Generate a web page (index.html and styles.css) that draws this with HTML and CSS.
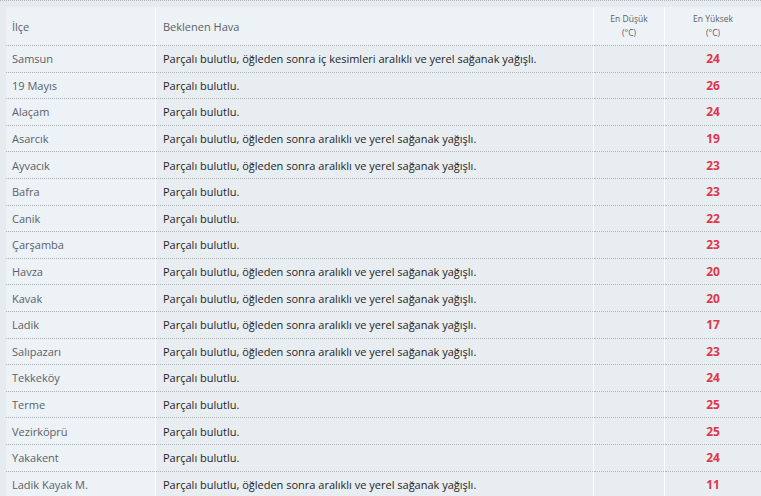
FILE: index.html
```html
<!DOCTYPE html>
<html lang="tr">
<head>
<meta charset="utf-8">
<title>Samsun Hava Durumu</title>
<link rel="stylesheet" href="styles.css">
</head>
<body>
<div class="page">
<table class="forecast">
  <thead>
    <tr>
      <th class="c-name">İlçe</th>
      <th class="c-desc">Beklenen Hava</th>
      <th class="c-min">En Düşük<br>(°C)</th>
      <th class="c-max">En Yüksek<br>(°C)</th>
    </tr>
  </thead>
  <tbody>
    <tr><td class="c-name">Samsun</td><td class="c-desc">Parçalı bulutlu, öğleden sonra iç kesimleri aralıklı ve yerel sağanak yağışlı.</td><td class="c-min"></td><td class="c-max">24</td></tr>
    <tr><td class="c-name">19 Mayıs</td><td class="c-desc">Parçalı bulutlu.</td><td class="c-min"></td><td class="c-max">26</td></tr>
    <tr><td class="c-name">Alaçam</td><td class="c-desc">Parçalı bulutlu.</td><td class="c-min"></td><td class="c-max">24</td></tr>
    <tr><td class="c-name">Asarcık</td><td class="c-desc">Parçalı bulutlu, öğleden sonra aralıklı ve yerel sağanak yağışlı.</td><td class="c-min"></td><td class="c-max">19</td></tr>
    <tr><td class="c-name">Ayvacık</td><td class="c-desc">Parçalı bulutlu, öğleden sonra aralıklı ve yerel sağanak yağışlı.</td><td class="c-min"></td><td class="c-max">23</td></tr>
    <tr><td class="c-name">Bafra</td><td class="c-desc">Parçalı bulutlu.</td><td class="c-min"></td><td class="c-max">23</td></tr>
    <tr><td class="c-name">Canik</td><td class="c-desc">Parçalı bulutlu.</td><td class="c-min"></td><td class="c-max">22</td></tr>
    <tr><td class="c-name">Çarşamba</td><td class="c-desc">Parçalı bulutlu.</td><td class="c-min"></td><td class="c-max">23</td></tr>
    <tr><td class="c-name">Havza</td><td class="c-desc">Parçalı bulutlu, öğleden sonra aralıklı ve yerel sağanak yağışlı.</td><td class="c-min"></td><td class="c-max">20</td></tr>
    <tr><td class="c-name">Kavak</td><td class="c-desc">Parçalı bulutlu, öğleden sonra aralıklı ve yerel sağanak yağışlı.</td><td class="c-min"></td><td class="c-max">20</td></tr>
    <tr><td class="c-name">Ladik</td><td class="c-desc">Parçalı bulutlu, öğleden sonra aralıklı ve yerel sağanak yağışlı.</td><td class="c-min"></td><td class="c-max">17</td></tr>
    <tr><td class="c-name">Salıpazarı</td><td class="c-desc">Parçalı bulutlu, öğleden sonra aralıklı ve yerel sağanak yağışlı.</td><td class="c-min"></td><td class="c-max">23</td></tr>
    <tr><td class="c-name">Tekkeköy</td><td class="c-desc">Parçalı bulutlu.</td><td class="c-min"></td><td class="c-max">24</td></tr>
    <tr><td class="c-name">Terme</td><td class="c-desc">Parçalı bulutlu.</td><td class="c-min"></td><td class="c-max">25</td></tr>
    <tr><td class="c-name">Vezirköprü</td><td class="c-desc">Parçalı bulutlu.</td><td class="c-min"></td><td class="c-max">25</td></tr>
    <tr><td class="c-name">Yakakent</td><td class="c-desc">Parçalı bulutlu.</td><td class="c-min"></td><td class="c-max">24</td></tr>
    <tr><td class="c-name">Ladik Kayak M.</td><td class="c-desc">Parçalı bulutlu, öğleden sonra aralıklı ve yerel sağanak yağışlı.</td><td class="c-min"></td><td class="c-max">11</td></tr>
  </tbody>
</table>
</div>
</body>
</html>
```

FILE: styles.css
```css
html, body {
  margin: 0;
  padding: 0;
  background: #e6ebef;
}
body {
  font-family: "Open Sans", "Noto Sans", "Liberation Sans", sans-serif;
  font-size: 11px;
}
.page {
  border-top: 1px dotted #b4b8bc;
  padding: 6px 0 0 6px;
}
.forecast {
  width: 755px;
  border-collapse: collapse;
  table-layout: fixed;
}
.forecast th,
.forecast td {
  border-bottom: 1px dotted #b4b8bc;
  border-right: 1px solid #ffffff;
  padding: 0;
  vertical-align: middle;
  white-space: nowrap;
  overflow: hidden;
}
.forecast th:last-child,
.forecast td:last-child {
  border-right: none;
}
.forecast thead th {
  height: 38px;
  background: #edf2f6;
  font-weight: normal;
  color: #5a6168;
  text-align: left;
}
.forecast tbody td {
  height: 25.6px;
  background: #e8edf1;
}
.c-name { width: 143px; padding-left: 6px !important; }
.c-desc { width: 430px; padding-left: 7px !important; }
.c-min { width: 70px; }
.c-max { width: auto; }

.forecast thead .c-min,
.forecast thead .c-max {
  text-align: center;
  font-size: 8.5px;
  line-height: 14px;
}
.forecast tbody td.c-name {
  background: #edf2f6;
  color: #5a6168;
}
.forecast tbody td.c-desc {
  color: #1f1f1f;
}
.forecast tbody td.c-max {
  text-align: center;
  font-weight: bold;
  font-size: 12px;
  color: #e2354b;
}
```
